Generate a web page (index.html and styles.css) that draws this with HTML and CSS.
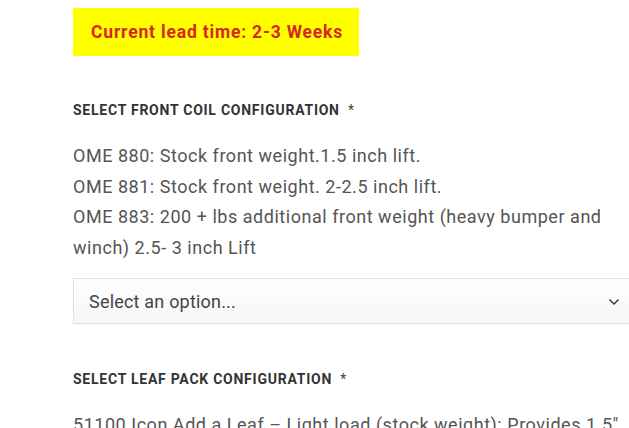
FILE: index.html
```html
<!DOCTYPE html>
<html>
<head>
<meta charset="utf-8">
<link rel="stylesheet" href="styles.css">
</head>
<body>
<div class="page">
  <div class="lead">Current lead time: 2-3 Weeks</div>
  <div class="field">
    <div class="label">Select Front Coil Configuration <span class="req">*</span></div>
    <div class="desc">
      OME 880: Stock front weight.1.5 inch lift.<br>
      OME 881: Stock front weight. 2-2.5 inch lift.<br>
      OME 883: 200 + lbs additional front weight (heavy bumper and winch) 2.5- 3 inch Lift
    </div>
    <div class="select">
      <span>Select an option...</span>
      <svg class="chev" width="12" height="8" viewBox="0 0 12 8"><path d="M1.5 1.5 L6 6 L10.5 1.5" fill="none" stroke="#333" stroke-width="1.4"/></svg>
    </div>
  </div>
  <div class="field second">
    <div class="label">Select Leaf Pack Configuration <span class="req">*</span></div>
    <div class="desc">
      51100 Icon Add a Leaf – Light load (stock weight): Provides 1.5″ lift
    </div>
  </div>
</div>
</body>
</html>
```
FILE: styles.css
```css
html, body {
  margin: 0;
  padding: 0;
  background: #fff;
  overflow: hidden;
}
.page {
  padding: 8px 0 0 73px;
  font-family: Roboto, "Liberation Sans", sans-serif;
  width: 600px;
}
.lead {
  display: inline-block;
  box-sizing: border-box;
  background: #ffff00;
  color: #d9261c;
  font-weight: 700;
  font-size: 17.5px;
  letter-spacing: 0.82px;
  line-height: 48px;
  height: 48px;
  padding: 0 0 0 18px;
  width: 286px;
  white-space: nowrap;
}
.field {
  margin-top: 44px;
}
.second {
  margin-top: 45px;
}
.label {
  font-size: 14px;
  font-weight: 700;
  text-transform: uppercase;
  color: #333;
  line-height: 20px;
  letter-spacing: 0.75px;
}
.req {
  font-weight: 400;
  color: #444;
  margin-left: 4px;
}
.desc {
  margin-top: 21px;
  font-size: 18px;
  line-height: 30.5px;
  color: #555;
  width: 556px;
  letter-spacing: 0.53px;
}
.select {
  margin-top: 15px;
  box-sizing: border-box;
  height: 46px;
  width: 570px;
  border: 1px solid #e2e2e2;
  background: linear-gradient(#fff, #f6f6f6);
  display: flex;
  align-items: center;
  justify-content: space-between;
  padding: 0 22px 0 15px;
  font-size: 18px;
  letter-spacing: 0.2px;
  color: #444;
  box-shadow: 0 1px 2px rgba(0,0,0,0.04);
}
.chev {
  margin-top: 1px;
}
```
